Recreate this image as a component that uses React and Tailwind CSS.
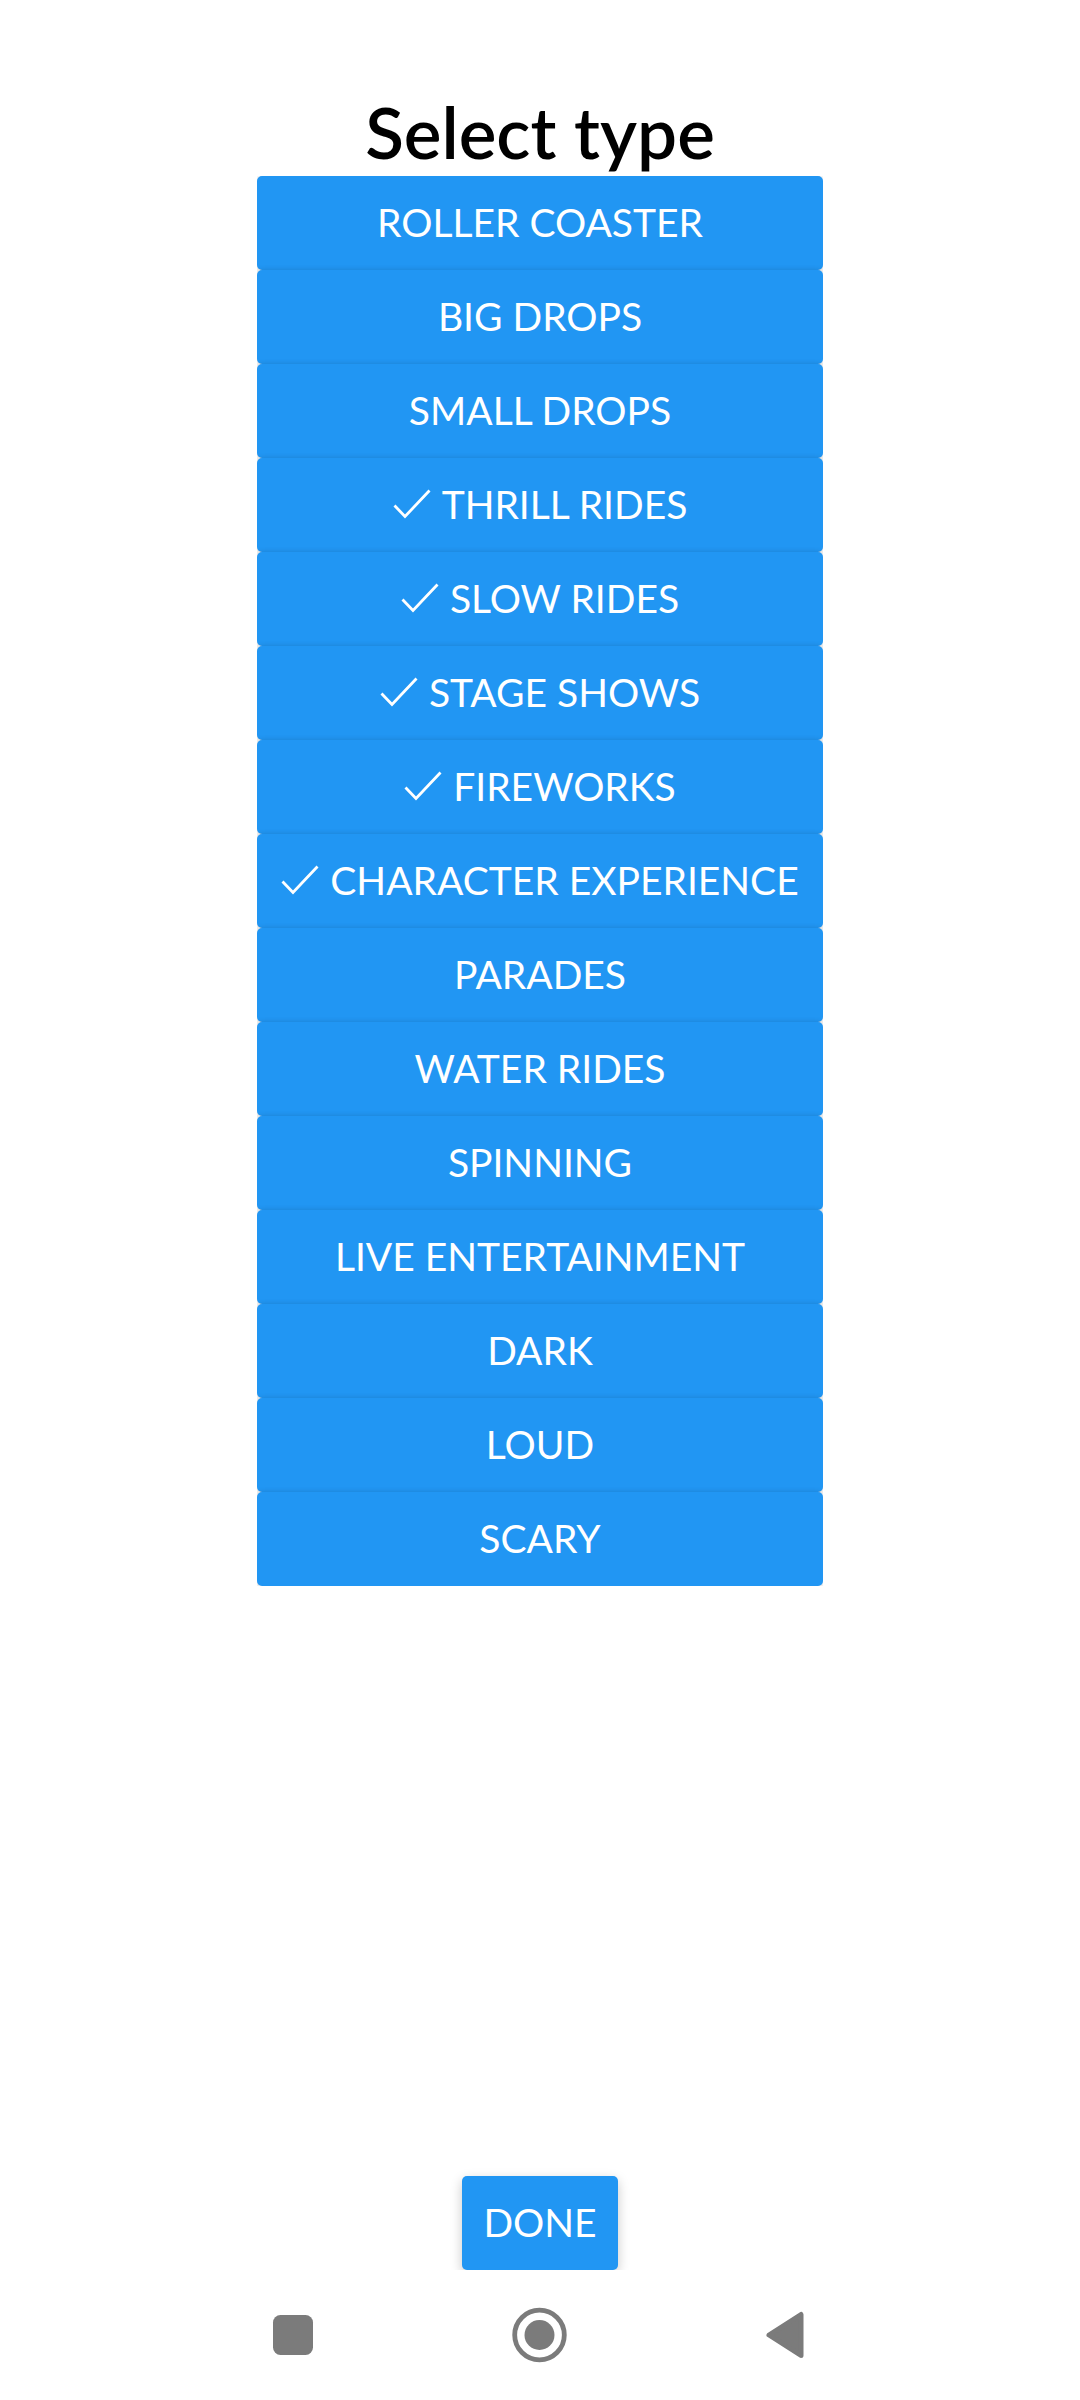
import { useState } from "react";

const TYPES = [
  "Roller Coaster",
  "Big Drops",
  "Small Drops",
  "Thrill Rides",
  "Slow Rides",
  "Stage Shows",
  "Fireworks",
  "Character Experience",
  "Parades",
  "Water Rides",
  "Spinning",
  "Live Entertainment",
  "Dark",
  "Loud",
  "Scary",
];

const INITIAL = ["Thrill Rides", "Slow Rides", "Stage Shows", "Fireworks", "Character Experience"];

function Check() {
  return (
    <svg className="h-[30px] w-[38px] shrink-0" viewBox="0 0 38 30" fill="none" aria-hidden="true">
      <path d="M1.5 16.5L12 27.5L36.5 1.5" stroke="currentColor" strokeWidth="2.8" />
    </svg>
  );
}

function TypeButton({ label, selected, onToggle }) {
  return (
    <button
      type="button"
      aria-pressed={selected}
      onClick={onToggle}
      className="flex h-[94px] w-full items-center justify-center gap-[11px] rounded-[5px] bg-[#2196f3] pb-0.5 text-[39px] leading-[48px] whitespace-nowrap text-white uppercase shadow-[0_1px_6px_rgba(0,0,0,0.2)]"
    >
      {selected && <Check />}
      <span>{label}</span>
    </button>
  );
}

export default function App() {
  const [selected, setSelected] = useState(INITIAL);
  const toggle = (name) =>
    setSelected((s) => (s.includes(name) ? s.filter((n) => n !== name) : [...s, name]));

  return (
    <div className="flex min-h-screen flex-col bg-white font-['Lato',sans-serif]">
      <main className="flex grow flex-col items-center pt-24">
        <h1 className="mb-2 text-[71px] leading-[72px] font-semibold text-black">Select type</h1>
        <div className="w-[566px] max-w-full overflow-hidden">
          {TYPES.map((name) => (
            <TypeButton
              key={name}
              label={name}
              selected={selected.includes(name)}
              onToggle={() => toggle(name)}
            />
          ))}
        </div>
        <div className="mt-auto overflow-hidden px-5 pt-5">
          <button
            type="button"
            className="h-[94px] w-[156px] rounded-[5px] bg-[#2196f3] pb-0.5 text-[39px] leading-[48px] text-white uppercase shadow-[0_4px_12px_rgba(0,0,0,0.22)]"
          >
            Done
          </button>
        </div>
      </main>
      <nav className="flex h-[130px] items-center justify-center gap-[186px] text-[#7b7b7b]">
        <button type="button" aria-label="Recent apps">
          <svg className="size-[60px]" viewBox="0 0 60 60" fill="currentColor" aria-hidden="true">
            <rect x="9" y="10" width="40" height="40" rx="7.5" />
          </svg>
        </button>
        <button type="button" aria-label="Home">
          <svg className="size-[60px]" viewBox="0 0 60 60" fill="currentColor" aria-hidden="true">
            <circle cx="29.5" cy="30" r="24.8" fill="none" stroke="currentColor" strokeWidth="4.8" />
            <circle cx="29.5" cy="30" r="15" />
          </svg>
        </button>
        <button type="button" aria-label="Back">
          <svg className="size-[60px]" viewBox="0 0 60 60" fill="currentColor" aria-hidden="true">
            <path
              d="M13 30L45 9.5V50.5Z"
              stroke="currentColor"
              strokeWidth="5"
              strokeLinejoin="round"
            />
          </svg>
        </button>
      </nav>
    </div>
  );
}
